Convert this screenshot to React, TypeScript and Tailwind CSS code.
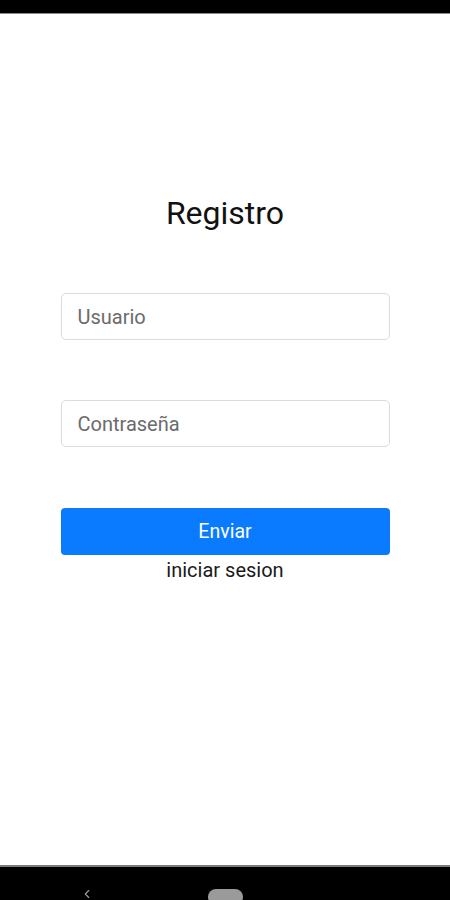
import { ChevronLeft } from "lucide-react";

export default function App() {
  return (
    <div className="w-[450px] h-[900px] bg-white flex flex-col overflow-hidden" style={{ fontFamily: "Roboto, 'Noto Sans', sans-serif" }}>
      {/* Status bar */}
      <div className="h-[14px] bg-black border-b border-[#8a8a8a] shrink-0" />

      {/* Form */}
      <div className="flex-1 flex flex-col items-center pt-[180px]">
        <h1 className="text-[32px] leading-[38px] text-[#111] font-normal">Registro</h1>

        <input
          placeholder="Usuario"
          className="mt-[61px] w-[329px] h-[47px] px-4 text-[20px] border border-[#dcdcdc] rounded-[5px] placeholder:text-[#6b6b6b] outline-none"
        />
        <input
          type="password"
          placeholder="Contraseña"
          className="mt-[60px] w-[329px] h-[47px] px-4 text-[20px] border border-[#dcdcdc] rounded-[5px] placeholder:text-[#6b6b6b] outline-none"
        />

        <button className="mt-[61px] w-[329px] h-[47px] bg-[#0a7bff] text-white text-[19.5px] rounded-[4px]">
          Enviar
        </button>
        <p className="mt-[3px] text-[20px] leading-[24px] text-[#1a1a1a]">iniciar sesion</p>
      </div>

      {/* Navigation bar */}
      <div className="h-[35px] bg-black border-t-2 border-[#7a7a7a] shrink-0 relative">
        <ChevronLeft className="absolute left-[80px] top-[20px] text-[#9a9a9a]" size={14} strokeWidth={2} />
        <div className="absolute left-[208px] top-[22px] w-[35px] h-[16px] rounded-full bg-[#9a9a9a]" />
      </div>
    </div>
  );
}
